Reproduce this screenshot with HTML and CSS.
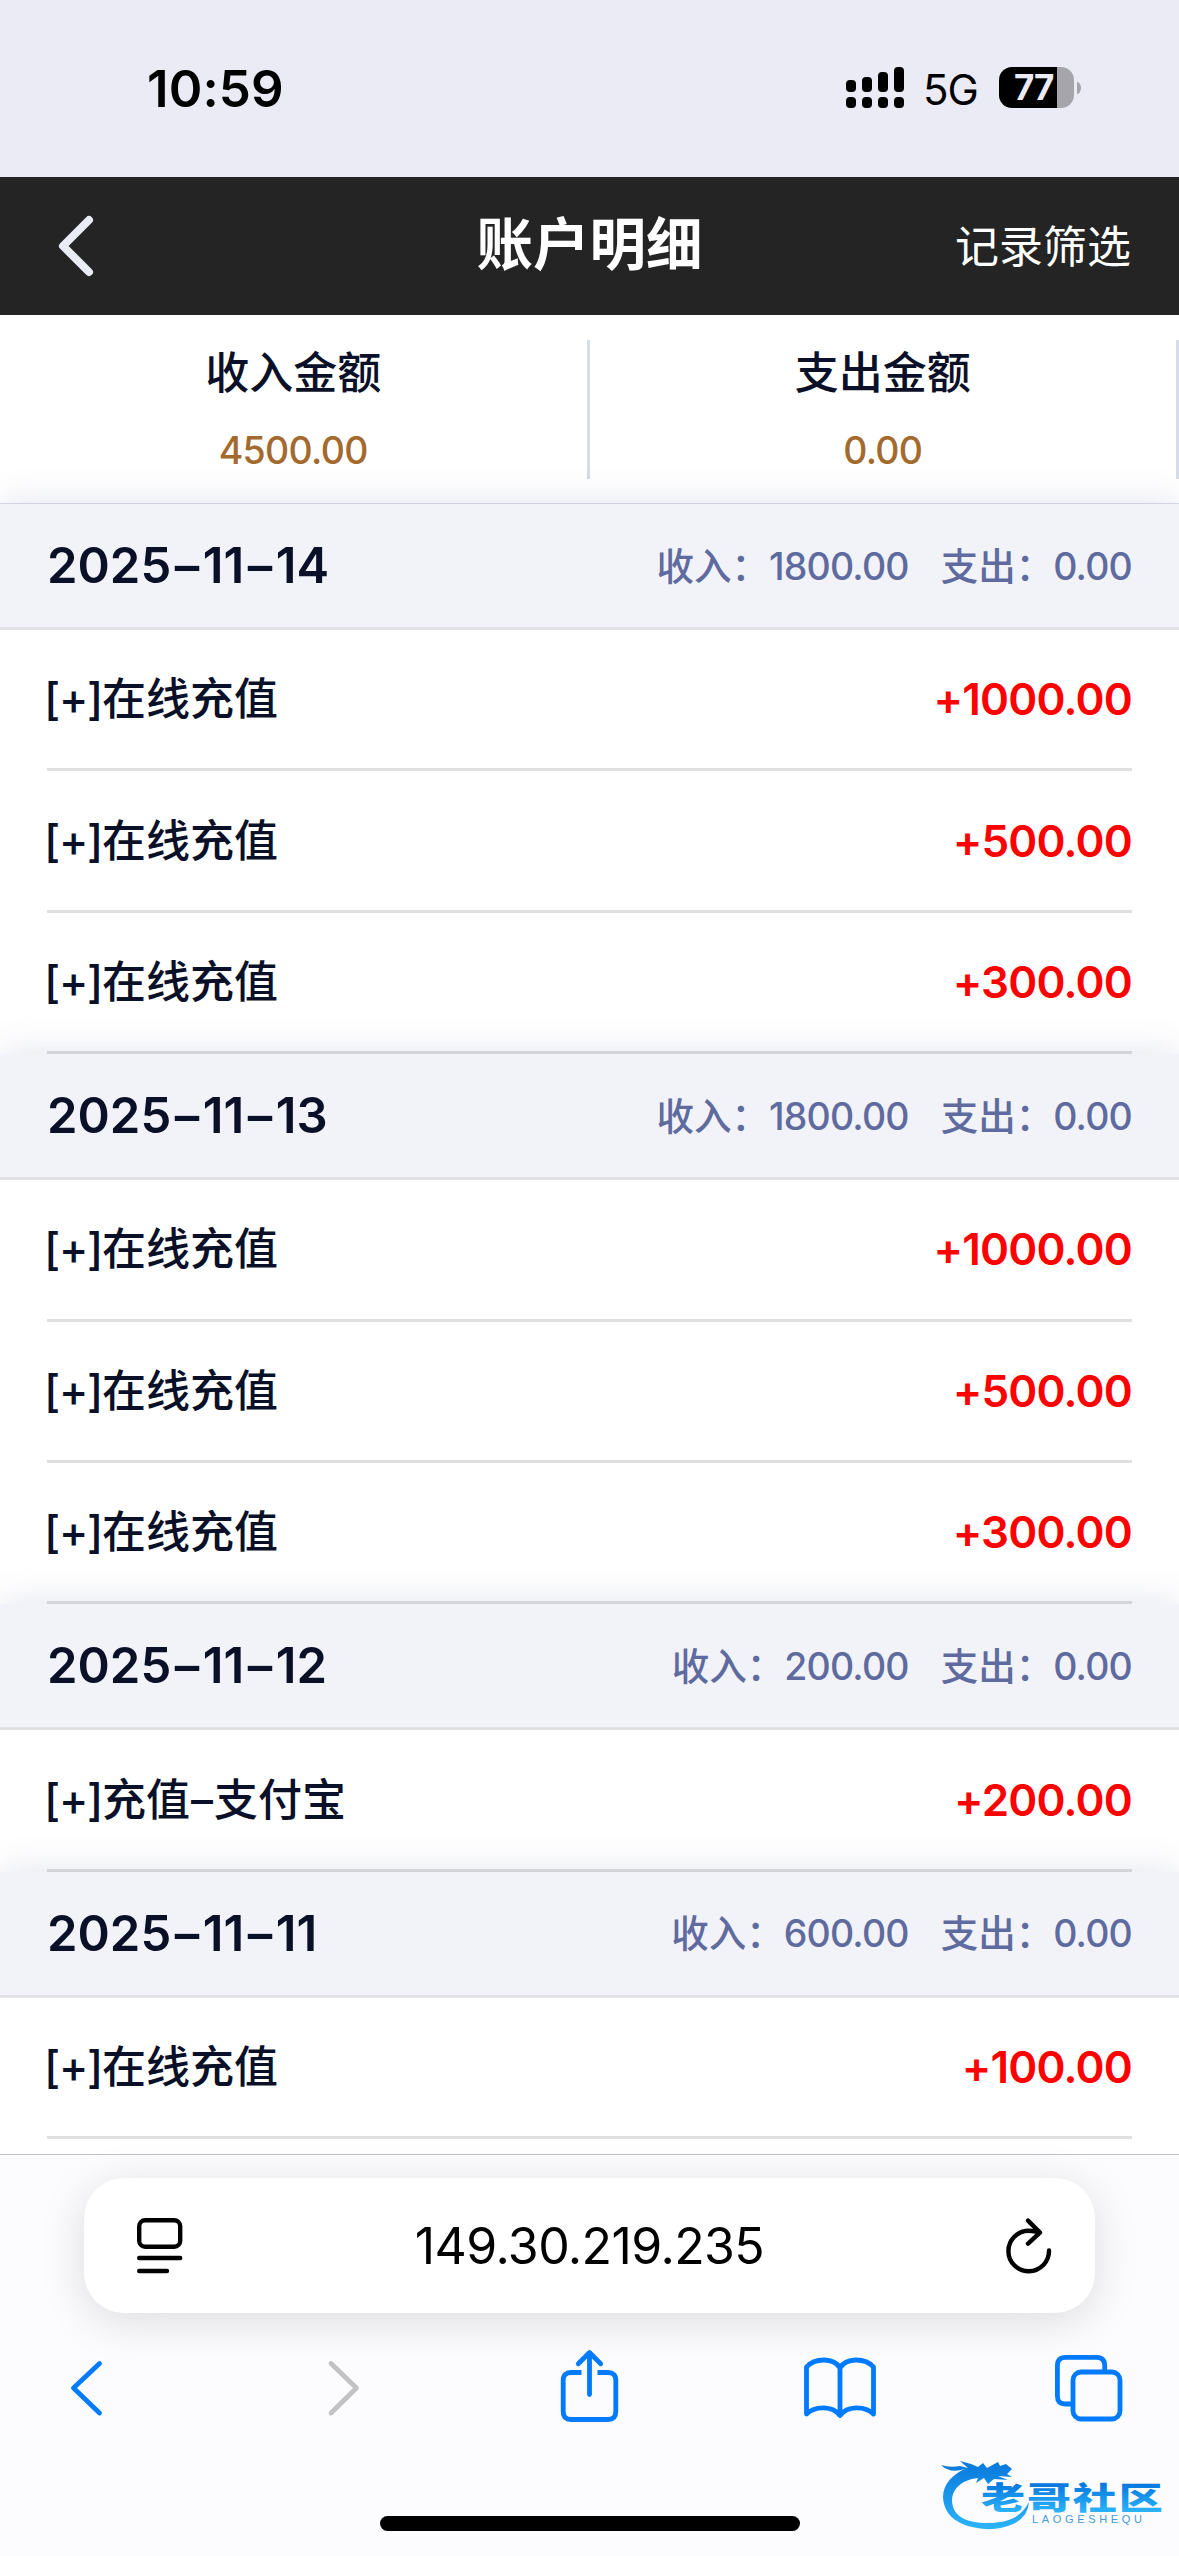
FILE: index.html
```html
<!DOCTYPE html>
<html lang="zh-CN">
<head>
<meta charset="utf-8">
<title>账户明细</title>
<link rel="stylesheet" href="styles.css">
</head>
<body>
<div class="screen">
  <div class="status">
    <span class="time">10:59</span>
    <div class="status-right">
      <svg class="signal" width="58" height="41" viewBox="0 0 58 41">
        <rect x="0" y="13" width="10" height="12" rx="4"/><rect x="16" y="10" width="10" height="15" rx="4"/><rect x="32" y="5" width="10" height="20" rx="4"/><rect x="48" y="0" width="10" height="25" rx="4"/>
        <rect x="0" y="30" width="10" height="11" rx="4"/><rect x="16" y="30" width="10" height="11" rx="4"/><rect x="32" y="30" width="10" height="11" rx="4"/><rect x="48" y="30" width="10" height="11" rx="4"/>
      </svg>
      <span class="network">5G</span>
      <div class="battery"><span class="level">77</span></div>
      <i class="nub"></i>
    </div>
  </div>

  <header class="navbar">
    <svg class="nav-back" width="40" height="64" viewBox="0 0 40 64"><path d="M33 6L7 32L33 58"/></svg>
    <h1 class="title">账户明细</h1>
    <span class="filter">记录筛选</span>
  </header>

  <section class="summary">
    <div class="total"><span class="total-label">收入金额</span><span class="total-value">4500.00</span></div>
    <div class="total"><span class="total-label">支出金额</span><span class="total-value">0.00</span></div>
  </section>

  <main class="list">
    <div class="day"><span class="date">2025<i class="dash">–</i>11<i class="dash">–</i>14</span><span class="in">收入：<b class="num">1800.00</b></span><span class="out">支出：<b class="num">0.00</b></span></div>
    <div class="row"><span class="name"><span class="sign">[+]</span>在线充值</span><span class="amount">+1000.00</span></div>
    <div class="row"><span class="name"><span class="sign">[+]</span>在线充值</span><span class="amount">+500.00</span></div>
    <div class="row"><span class="name"><span class="sign">[+]</span>在线充值</span><span class="amount">+300.00</span></div>
    <div class="day"><span class="date">2025<i class="dash">–</i>11<i class="dash">–</i>13</span><span class="in">收入：<b class="num">1800.00</b></span><span class="out">支出：<b class="num">0.00</b></span></div>
    <div class="row"><span class="name"><span class="sign">[+]</span>在线充值</span><span class="amount">+1000.00</span></div>
    <div class="row"><span class="name"><span class="sign">[+]</span>在线充值</span><span class="amount">+500.00</span></div>
    <div class="row"><span class="name"><span class="sign">[+]</span>在线充值</span><span class="amount">+300.00</span></div>
    <div class="day"><span class="date">2025<i class="dash">–</i>11<i class="dash">–</i>12</span><span class="in">收入：<b class="num">200.00</b></span><span class="out">支出：<b class="num">0.00</b></span></div>
    <div class="row"><span class="name"><span class="sign">[+]</span>充值<i class="link">–</i>支付宝</span><span class="amount">+200.00</span></div>
    <div class="day"><span class="date">2025<i class="dash">–</i>11<i class="dash">–</i>11</span><span class="in">收入：<b class="num">600.00</b></span><span class="out">支出：<b class="num">0.00</b></span></div>
    <div class="row"><span class="name"><span class="sign">[+]</span>在线充值</span><span class="amount">+100.00</span></div>
  </main>

  <footer class="browser">
    <div class="address">
      <svg class="reader" width="46" height="56" viewBox="0 0 46 56"><rect x="2.2" y="2.2" width="41" height="26.5" rx="6"/><path d="M2.2 40H43.2M2.2 53H30"/></svg>
      <span class="url">149.30.219.235</span>
      <svg class="reload" width="46" height="56" viewBox="0 0 46 56"><path d="M43 32.5A20.3 20.3 0 1 1 22.7 12.7C27 12.7 30 13.3 34 14.6M22 2.6L34 14.6L22 25.6"/></svg>
    </div>
    <div class="tools">
      <svg width="35" height="76" viewBox="0 0 35 76"><path d="M31.500 15.500L5.500 40L31.500 65"/></svg>
      <svg class="forward" width="35" height="76" viewBox="0 0 35 76"><path d="M5 15.500L30.500 40L5 65"/></svg>
      <svg class="share" width="59" height="76" viewBox="0 0 59 76"><path class="tray" d="M21.500 24.500H11Q3.200 24.500 3.200 32V63.500Q3.200 71.500 11 71.500H48Q55.800 71.500 55.800 63.500V32Q55.800 24.500 48 24.500H37.500"/><path d="M29.500 46.500V5M18.300 15.700L29.500 4.500L40.700 15.700"/></svg>
      <svg class="book" width="72" height="76" viewBox="0 0 72 76"><path d="M36 20C30 9.500 11 9.500 2.500 19V66C11 57.500 29 57.500 36 67.500C43 57.500 61 57.500 69.500 66V19C61 9.500 42 9.500 36 20V67"/></svg>
      <svg class="tabs" width="68" height="76" viewBox="0 0 68 76"><path class="tray" d="M16 56H10.500Q2.400 56 2.400 48V17.500Q2.400 9.300 10.500 9.300H41.500Q49.700 9.300 49.700 17.500V23"/><rect x="18" y="24" width="47" height="47" rx="8"/></svg>
    </div>
    <div class="home"></div>
  </footer>

  <svg class="watermark" width="230" height="86" viewBox="0 0 230 86">
    <defs><linearGradient id="sea" gradientUnits="userSpaceOnUse" x1="0" y1="12" x2="0" y2="80"><stop offset="0" stop-color="#0878dc"/><stop offset="1" stop-color="#2cb5fb"/></linearGradient>
    <linearGradient id="brand" gradientUnits="userSpaceOnUse" x1="0" y1="34" x2="0" y2="62"><stop offset="0" stop-color="#0678df"/><stop offset="1" stop-color="#2cb4fa"/></linearGradient></defs>
    <path fill="url(#sea)" d="M1 15Q10 18 20 16L28 18L20 11L31 14L38 17L43 13L47 18L58 12L60 16L66 14L72 19L67 24L72 27L58 26L68 30L54 29L48 34L44 28L36 33L38 28C20 30 12 40 12 51C13 67 27 73 47 73C69 73 81 67 89 52Q88 67 73 74Q60 80 45 79C20 77 4 67 3 47C3 34 13 24 25 19Q10 24 1 15Z"/>
    <text class="brand" transform="translate(41 0) scale(1.42 1)" x="0" y="59.500" textLength="128">老哥社区</text>
    <text class="latin" x="92" y="73" textLength="110">LAOGESHEQU</text>
  </svg>
</div>
</body>
</html>
```
FILE: styles.css
```css
* { box-sizing: border-box; }
body { margin: 0; background: #fff; font-family: Inter, "Noto Sans CJK SC", sans-serif; color: #0a1027; }
svg { display: block; flex: none; }
.screen { position: relative; width: 1179px; height: 2556px; overflow: hidden; display: flex; flex-direction: column; }

.status { height: 177px; flex: none; background: #ebebf5; display: flex; justify-content: space-between; align-items: center; padding: 0 98px 2px 147px; color: #000; }
.time { font-size: 51px; font-weight: 600; letter-spacing: .1px; margin-top: 1px; }
.status-right { display: flex; align-items: center; }
.network { margin: 3px 0 0 19px; width: 58px; font-size: 42px; letter-spacing: -1px; }
.battery { margin-left: 18px; width: 75px; height: 41px; border-radius: 13px; background: linear-gradient(90deg, #000 58px, #a5a5ab 58px); color: #ebebf5; display: flex; align-items: center; padding-left: 15px; }
.level { font-size: 35px; font-weight: 700; letter-spacing: -1px; line-height: 41px; }
.nub { width: 4px; height: 12px; margin-left: 3px; background: #a5a5ab; border-radius: 0 4px 4px 0 / 0 6px 6px 0; }

.navbar { height: 138px; flex: none; background: #242424; color: #fff; display: grid; grid-template-columns: 1fr auto 1fr; align-items: center; padding: 0 48px 0 56px; }
.nav-back { fill: none; stroke: #e9ecf4; stroke-width: 8; stroke-linecap: round; stroke-linejoin: round; }
.title { margin: 0 0 3px -8px; font-size: 56.500px; font-weight: 600; line-height: 80px; }
.filter { justify-self: end; font-size: 44px; line-height: 60px; margin-top: 2px; }

.summary { height: 189px; flex: none; display: flex; padding: 25px 0 24px; border-bottom: 1px solid #dcdeeb; }
.total { flex: 1; display: flex; flex-direction: column; align-items: center; border-right: 3px solid #d5dcea; }
.total-label { font-size: 44px; font-weight: 500; line-height: 66px; }
.total-value { font-size: 37.500px; font-weight: 500; line-height: 46px; margin-top: 22px; color: #a36a2e; letter-spacing: -.7px; }

.list { flex: none; height: 1650px; }
.day { height: 126px; display: flex; align-items: center; padding: 0 47px; background: #f2f3f9; border-bottom: 3px solid #e1e1e3; box-shadow: 0 0 36px rgba(70, 80, 140, .16); clip-path: inset(-40px 0 0 0); }
.date { flex: 1; font-size: 49px; font-weight: 600; }
.dash { font-style: normal; padding: 0 3.500px; }
.in, .out { color: #5f6b9f; font-size: 37.500px; font-weight: 500; margin-bottom: 5px; }
.out { margin-left: 32px; }
.num { font-weight: 500; letter-spacing: -.8px; }
.row { height: 141.400px; margin: 0 47px; border-bottom: 3px solid #e0e0e1; display: flex; align-items: center; justify-content: space-between; font-size: 44px; font-weight: 500; }
.name { margin: 0 0 6px -3px; }
.sign { letter-spacing: -1.300px; }
.link { font-style: normal; padding: 0 1px; }
.amount { color: #f00; font-weight: 600; letter-spacing: -.8px; }

.browser { position: relative; flex: none; height: 402px; border-top: 1px solid #c1c1c3; background: #fcfcfe; display: flex; flex-direction: column; align-items: center; color: #000; }
.address { width: 1011px; height: 135px; margin-top: 23px; border-radius: 40px; background: #fff; box-shadow: 0 8px 46px rgba(0, 0, 0, .13); display: flex; align-items: center; justify-content: space-between; padding: 0 43px 0 53px; }
.reader, .reload { fill: none; stroke: #000; stroke-width: 4.400; stroke-linecap: round; stroke-linejoin: round; }
.url { font-size: 50px; letter-spacing: -.6px; margin-left: -10px; }
.tools { width: 100%; margin-top: 35px; padding-left: 68px; display: flex; fill: none; stroke: #007aff; stroke-width: 4.800; stroke-linecap: round; stroke-linejoin: round; }
.forward { margin-left: 223px; stroke: #c2c2c4; }
.share { margin-left: 199px; }
.book { margin-left: 185px; }
.tabs { margin-left: 179px; }
.tray { stroke-linecap: butt; }
.home { width: 420px; height: 15px; border-radius: 8px; background: #000; margin-top: 92px; }

.watermark { position: absolute; left: 940px; top: 2450px; }
.brand { font: 900 31px "Noto Sans CJK SC", sans-serif; fill: url(#brand); }
.latin { font: 400 11px "Liberation Sans", sans-serif; fill: #459bda; }
```
